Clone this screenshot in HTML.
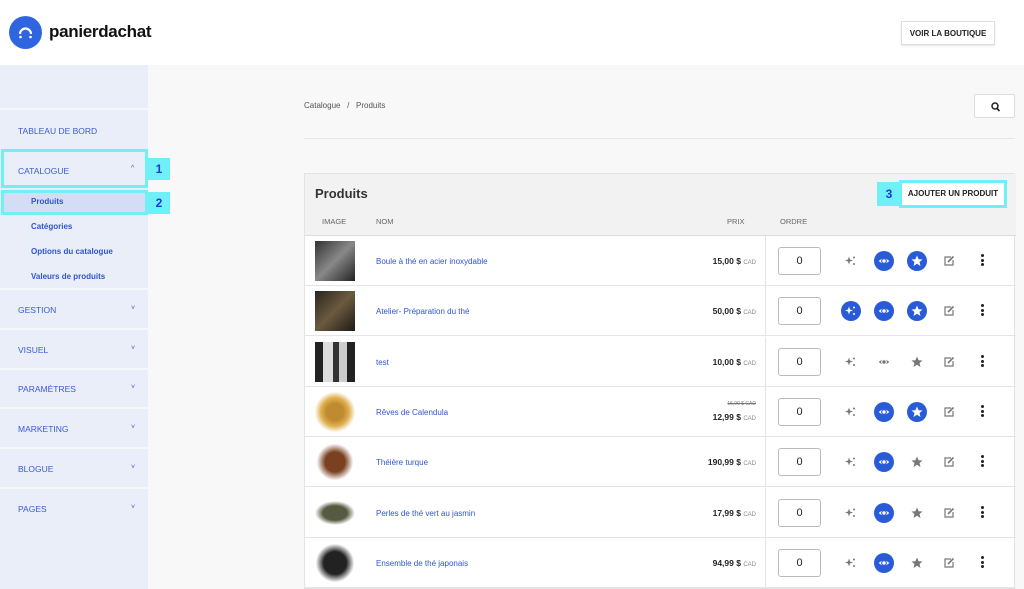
<!DOCTYPE html>
<html><head><meta charset="utf-8"><style>
*{box-sizing:border-box;margin:0;padding:0}
body{width:1024px;height:589px;overflow:hidden;background:#f8f8f8;font-family:"Liberation Sans",sans-serif;position:relative}
.hdr{position:absolute;left:0;top:0;width:1024px;height:65px;background:#fff}
.logo{position:absolute;left:9px;top:16px;width:33px;height:33px;border-radius:50%;background:#2f66e0}
.brand{position:absolute;left:49px;top:22px;font-size:17px;font-weight:bold;color:#111;letter-spacing:-.3px}
.vb{position:absolute;left:901px;top:21px;width:94px;height:24px;background:#fff;border:1px solid #ddd;box-shadow:0 1px 2px rgba(0,0,0,.1);font-size:8px;font-weight:bold;text-align:center;line-height:23px;color:#222}
.side{position:absolute;left:0;top:65px;width:148px;height:524px;background:#e9eef8}
.sep{position:absolute;left:0;width:148px;height:2px;background:#f5f7fb}
.si{position:absolute;left:18px;font-size:8.5px;color:#3a5ad9}
.sub{position:absolute;left:31px;font-size:8px;font-weight:bold;color:#2f55d0}
.chev{position:absolute;left:131px;font-size:7px;color:#3a5ad9}
.hl{position:absolute;border:3px solid #6ff0f8}
.num{position:absolute;background:#6ff0f8;color:#1a3ad0;font-weight:bold;font-size:12px;text-align:center}
.bc{position:absolute;left:304px;top:101px;font-size:8px;color:#555}
.sb{position:absolute;left:974px;top:94px;width:41px;height:24px;background:#fff;border:1px solid #ddd;border-radius:2px}
.line{position:absolute;left:304px;top:138px;width:711px;height:1px;background:#e6e6e6}
.card{position:absolute;left:304px;top:173px;width:711px;height:416px;background:#fff;border:1px solid #e3e3e3}
.ch{position:absolute;left:0;top:0;width:711px;height:62px;background:#f2f2f2;border-bottom:1px solid #ddd}
.row{position:absolute;left:0;width:711px;height:50px;border-bottom:1px solid #e5e5e5}
.th{position:absolute;top:43px;font-size:7.5px;color:#666}
.img{position:absolute;left:10px;top:5px;width:40px;height:40px}
.nm{position:absolute;left:71px;top:21px;font-size:8px;color:#2f55d0}
.pr{position:absolute;right:260px;top:20px;font-size:8.5px;font-weight:bold;color:#222}
.pr small{font-size:6px;font-weight:normal;color:#888}
.vd{position:absolute;left:460px;top:0;width:1px;height:50px;background:#e5e5e5}
.inp{position:absolute;left:473px;top:11px;width:43px;height:28px;border:1px solid #bbb;border-radius:3px;text-align:center;font-size:11px;line-height:26px;color:#222}
.ic{position:absolute;top:15px;width:20px;height:20px;border-radius:50%;color:#777}
.ic svg{display:block}
.ic.b{background:#2a5bd7;color:#fff}
.dots{position:absolute;left:676px;top:18px;width:3px}
.dots i{display:block;width:3px;height:3px;border-radius:50%;background:#222;margin-bottom:1.5px}
</style></head><body>
<svg width="0" height="0" style="position:absolute">
<defs>
<symbol id="sp" viewBox="0 0 20 20"><path d="M8 5.5 L9 8.5 L12 9.5 L9 10.5 L8 13.5 L7 10.5 L4 9.5 L7 8.5Z" fill="currentColor"/><circle cx="13" cy="6.5" r="1" fill="currentColor"/><circle cx="13" cy="13" r="1" fill="currentColor"/></symbol>
<symbol id="ey" viewBox="0 0 20 20"><path d="M4 10 Q10 4 16 10 Q10 16 4 10Z" fill="currentColor"/><circle cx="10" cy="10" r="2.3" fill="none" stroke-width="1.2" class="pup"/></symbol>
<symbol id="st" viewBox="0 0 20 20"><path d="M10 4.5 L11.6 8.2 L15.5 8.5 L12.5 11 L13.5 15 L10 12.8 L6.5 15 L7.5 11 L4.5 8.5 L8.4 8.2Z" fill="currentColor"/></symbol>
<symbol id="ed" viewBox="0 0 20 20"><path d="M12 6 H6 V14 H14 V9" fill="none" stroke="currentColor" stroke-width="1.2"/><path d="M9 11 L14.5 5.5" stroke="currentColor" stroke-width="1.6"/></symbol>
</defs></svg>
<div class="hdr">
<div class="logo"><svg width="33" height="33" viewBox="0 0 33 33"><path d="M11 18 A5.5 5.5 0 0 1 22 18" stroke="#fff" stroke-width="2.2" fill="none"/><circle cx="11.5" cy="21" r="1.3" fill="#fff"/><circle cx="21.5" cy="21" r="1.3" fill="#fff"/></svg></div>
<div class="brand">panierdachat</div>
<div class="vb">VOIR LA BOUTIQUE</div>
</div>
<div class="side">
<div class="sep" style="top:43px"></div>
<div class="si" style="top:61px">TABLEAU DE BORD</div>
<div class="si" style="top:101px">CATALOGUE</div><div class="chev" style="top:100px">^</div>
<div style="position:absolute;left:3px;top:127px;width:143px;height:22px;background:#d3def4"></div>
<div class="sub" style="top:132px">Produits</div>
<div class="sub" style="top:157px">Catégories</div>
<div class="sub" style="top:182px">Options du catalogue</div>
<div class="sub" style="top:207px">Valeurs de produits</div>
<div class="sep" style="top:223px"></div>
<div class="si" style="top:240px">GESTION</div><div class="chev" style="top:240px">˅</div>
<div class="sep" style="top:263px"></div>
<div class="si" style="top:280px">VISUEL</div><div class="chev" style="top:280px">˅</div>
<div class="sep" style="top:303px"></div>
<div class="si" style="top:319px">PARAMÈTRES</div><div class="chev" style="top:319px">˅</div>
<div class="sep" style="top:342px"></div>
<div class="si" style="top:359px">MARKETING</div><div class="chev" style="top:359px">˅</div>
<div class="sep" style="top:382px"></div>
<div class="si" style="top:399px">BLOGUE</div><div class="chev" style="top:399px">˅</div>
<div class="sep" style="top:422px"></div>
<div class="si" style="top:439px">PAGES</div><div class="chev" style="top:439px">˅</div>
</div>
<div class="hl" style="left:1px;top:149px;width:147px;height:39px"></div>
<div class="num" style="left:148px;top:158px;width:22px;height:22px;line-height:22px">1</div>
<div class="hl" style="left:1px;top:190px;width:147px;height:25px"></div>
<div class="num" style="left:148px;top:192px;width:22px;height:22px;line-height:22px">2</div>
<div class="bc">Catalogue &nbsp;&nbsp;/&nbsp;&nbsp; Produits</div>
<div class="sb"><svg width="41" height="24"><circle cx="20" cy="11" r="3" stroke="#222" stroke-width="1.5" fill="none"/><path d="M22 13.5 L24.5 16" stroke="#222" stroke-width="1.6"/></svg></div>
<div class="line"></div>
<div class="card">
<div class="ch">
<div style="position:absolute;left:10px;top:12px;font-size:13px;font-weight:bold;color:#333">Produits</div>
<div class="th" style="left:17px">IMAGE</div><div class="th" style="left:71px">NOM</div>
<div class="th" style="left:422px">PRIX</div><div class="th" style="left:475px">ORDRE</div>
</div>
<div class="num" style="left:572px;top:8px;width:24px;height:24px;line-height:24px">3</div>
<div style="position:absolute;left:594px;top:6px;width:108px;height:28px;border:3px solid #6ff0f8;background:#fff;font-size:8px;font-weight:bold;text-align:center;line-height:22px;color:#222">AJOUTER UN PRODUIT</div>

<div class="row" style="top:62px"><div class="img" style="background:linear-gradient(135deg,#333,#888 50%,#222)"></div><div class="nm">Boule à thé en acier inoxydable</div><div class="pr">15,00 $ <small>CAD</small></div><div class="vd"></div><div class="inp">0</div>
<div class="ic" style="left:536px"><svg width="20" height="20"><use href="#sp"/></svg></div><div class="ic b" style="left:569px"><svg width="20" height="20" style="stroke:#2a5bd7"><use href="#ey"/></svg></div><div class="ic b" style="left:602px"><svg width="20" height="20"><use href="#st"/></svg></div><div class="ic" style="left:634px"><svg width="20" height="20"><use href="#ed"/></svg></div><div class="dots"><i></i><i></i><i></i></div></div>
<div class="row" style="top:112px"><div class="img" style="background:linear-gradient(135deg,#2a2520,#6b5a40 50%,#1e1a15)"></div><div class="nm">Atelier- Préparation du thé</div><div class="pr">50,00 $ <small>CAD</small></div><div class="vd"></div><div class="inp">0</div>
<div class="ic b" style="left:536px"><svg width="20" height="20"><use href="#sp"/></svg></div><div class="ic b" style="left:569px"><svg width="20" height="20" style="stroke:#2a5bd7"><use href="#ey"/></svg></div><div class="ic b" style="left:602px"><svg width="20" height="20"><use href="#st"/></svg></div><div class="ic" style="left:634px"><svg width="20" height="20"><use href="#ed"/></svg></div><div class="dots"><i></i><i></i><i></i></div></div>
<div class="row" style="top:163px"><div class="img" style="background:linear-gradient(90deg,#222 20%,#ddd 20%,#ddd 45%,#333 45%,#333 60%,#ccc 60%,#ccc 80%,#222 80%)"></div><div class="nm">test</div><div class="pr">10,00 $ <small>CAD</small></div><div class="vd"></div><div class="inp">0</div>
<div class="ic" style="left:536px"><svg width="20" height="20"><use href="#sp"/></svg></div><div class="ic" style="left:569px"><svg width="20" height="20" style="stroke:#fff"><use href="#ey"/></svg></div><div class="ic" style="left:602px"><svg width="20" height="20"><use href="#st"/></svg></div><div class="ic" style="left:634px"><svg width="20" height="20"><use href="#ed"/></svg></div><div class="dots"><i></i><i></i><i></i></div></div>
<div class="row" style="top:213px"><div class="img" style="background:radial-gradient(circle,#c08a30 30%,#e0b050 50%,#fff 72%)"></div><div class="nm">Rêves de Calendula</div><div style="position:absolute;right:260px;top:14px;font-size:5px;color:#777;text-decoration:line-through">15,99 $ CAD</div><div class="pr" style="top:25px">12,99 $ <small>CAD</small></div><div class="vd"></div><div class="inp">0</div>
<div class="ic" style="left:536px"><svg width="20" height="20"><use href="#sp"/></svg></div><div class="ic b" style="left:569px"><svg width="20" height="20" style="stroke:#2a5bd7"><use href="#ey"/></svg></div><div class="ic b" style="left:602px"><svg width="20" height="20"><use href="#st"/></svg></div><div class="ic" style="left:634px"><svg width="20" height="20"><use href="#ed"/></svg></div><div class="dots"><i></i><i></i><i></i></div></div>
<div class="row" style="top:263px"><div class="img" style="background:radial-gradient(circle,#7a4020 35%,#fff 65%)"></div><div class="nm">Théière turque</div><div class="pr">190,99 $ <small>CAD</small></div><div class="vd"></div><div class="inp">0</div>
<div class="ic" style="left:536px"><svg width="20" height="20"><use href="#sp"/></svg></div><div class="ic b" style="left:569px"><svg width="20" height="20" style="stroke:#2a5bd7"><use href="#ey"/></svg></div><div class="ic" style="left:602px"><svg width="20" height="20"><use href="#st"/></svg></div><div class="ic" style="left:634px"><svg width="20" height="20"><use href="#ed"/></svg></div><div class="dots"><i></i><i></i><i></i></div></div>
<div class="row" style="top:314px"><div class="img" style="background:radial-gradient(ellipse 50% 30%,#555a40 60%,#fff 100%)"></div><div class="nm">Perles de thé vert au jasmin</div><div class="pr">17,99 $ <small>CAD</small></div><div class="vd"></div><div class="inp">0</div>
<div class="ic" style="left:536px"><svg width="20" height="20"><use href="#sp"/></svg></div><div class="ic b" style="left:569px"><svg width="20" height="20" style="stroke:#2a5bd7"><use href="#ey"/></svg></div><div class="ic" style="left:602px"><svg width="20" height="20"><use href="#st"/></svg></div><div class="ic" style="left:634px"><svg width="20" height="20"><use href="#ed"/></svg></div><div class="dots"><i></i><i></i><i></i></div></div>
<div class="row" style="top:364px"><div class="img" style="background:radial-gradient(circle,#222 40%,#fff 68%)"></div><div class="nm">Ensemble de thé japonais</div><div class="pr">94,99 $ <small>CAD</small></div><div class="vd"></div><div class="inp">0</div>
<div class="ic" style="left:536px"><svg width="20" height="20"><use href="#sp"/></svg></div><div class="ic b" style="left:569px"><svg width="20" height="20" style="stroke:#2a5bd7"><use href="#ey"/></svg></div><div class="ic" style="left:602px"><svg width="20" height="20"><use href="#st"/></svg></div><div class="ic" style="left:634px"><svg width="20" height="20"><use href="#ed"/></svg></div><div class="dots"><i></i><i></i><i></i></div></div>
</div>
</body></html>
